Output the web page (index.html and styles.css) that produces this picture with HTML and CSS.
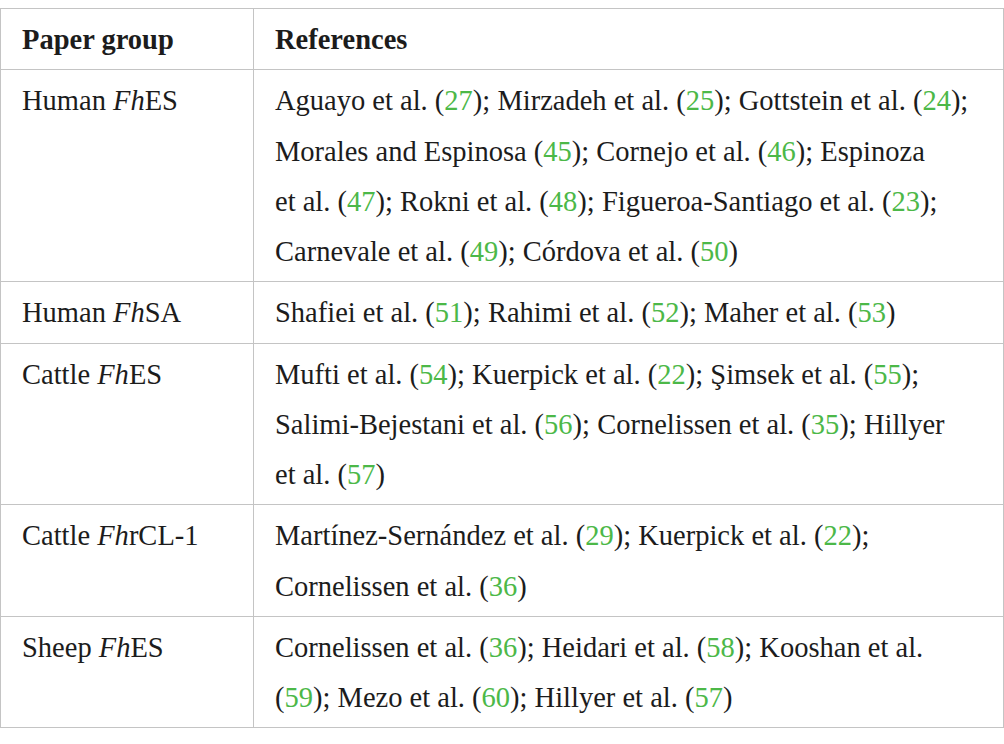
FILE: index.html
```html
<!DOCTYPE html>
<html lang="en">
<head>
	<meta charset="UTF-8">
	<title>Paper groups</title>
	<link rel="stylesheet" href="styles.css">
</head>
<body>
	<table class="refs">
		<tr>
			<th class="group">Paper group</th>
			<th>References</th>
		</tr>
		<tr>
			<td class="group">Human <i>Fh</i>ES</td>
			<td>Aguayo et al. (<span class="num">27</span>); Mirzadeh et al. (<span class="num">25</span>); Gottstein et al. (<span class="num">24</span>);<br>Morales and Espinosa (<span class="num">45</span>); Cornejo et al. (<span class="num">46</span>); Espinoza<br>et al. (<span class="num">47</span>); Rokni et al. (<span class="num">48</span>); Figueroa-Santiago et al. (<span class="num">23</span>);<br>Carnevale et al. (<span class="num">49</span>); Córdova et al. (<span class="num">50</span>)</td>
		</tr>
		<tr>
			<td class="group">Human <i>Fh</i>SA</td>
			<td>Shafiei et al. (<span class="num">51</span>); Rahimi et al. (<span class="num">52</span>); Maher et al. (<span class="num">53</span>)</td>
		</tr>
		<tr>
			<td class="group">Cattle <i>Fh</i>ES</td>
			<td>Mufti et al. (<span class="num">54</span>); Kuerpick et al. (<span class="num">22</span>); Şimsek et al. (<span class="num">55</span>);<br>Salimi-Bejestani et al. (<span class="num">56</span>); Cornelissen et al. (<span class="num">35</span>); Hillyer<br>et al. (<span class="num">57</span>)</td>
		</tr>
		<tr>
			<td class="group">Cattle <i>Fh</i>rCL-1</td>
			<td>Martínez-Sernández et al. (<span class="num">29</span>); Kuerpick et al. (<span class="num">22</span>);<br>Cornelissen et al. (<span class="num">36</span>)</td>
		</tr>
		<tr>
			<td class="group">Sheep <i>Fh</i>ES</td>
			<td>Cornelissen et al. (<span class="num">36</span>); Heidari et al. (<span class="num">58</span>); Kooshan et al.<br>(<span class="num">59</span>); Mezo et al. (<span class="num">60</span>); Hillyer et al. (<span class="num">57</span>)</td>
		</tr>
	</table>
</body>
</html>
```

FILE: styles.css
```css
* {
	margin: 0;
	padding: 0;
}
body {
	margin: 8px 0 0;
	background: #fff;
	color: #1c1c1c;
	font-family: "Liberation Serif", "Times New Roman", serif;
	font-size: 28.5px;
}
.refs {
	width: 1004px;
	border-collapse: collapse;
}
.refs th,
.refs td {
	border: 1px solid #c4c4c4;
	padding: 6px 21px 4px;
	line-height: 50.25px;
	text-align: left;
	vertical-align: top;
	white-space: nowrap;
}
.refs th {
	font-weight: bold;
}
.refs .group {
	width: 210px;
}
.num {
	color: #4cb848;
}
```
